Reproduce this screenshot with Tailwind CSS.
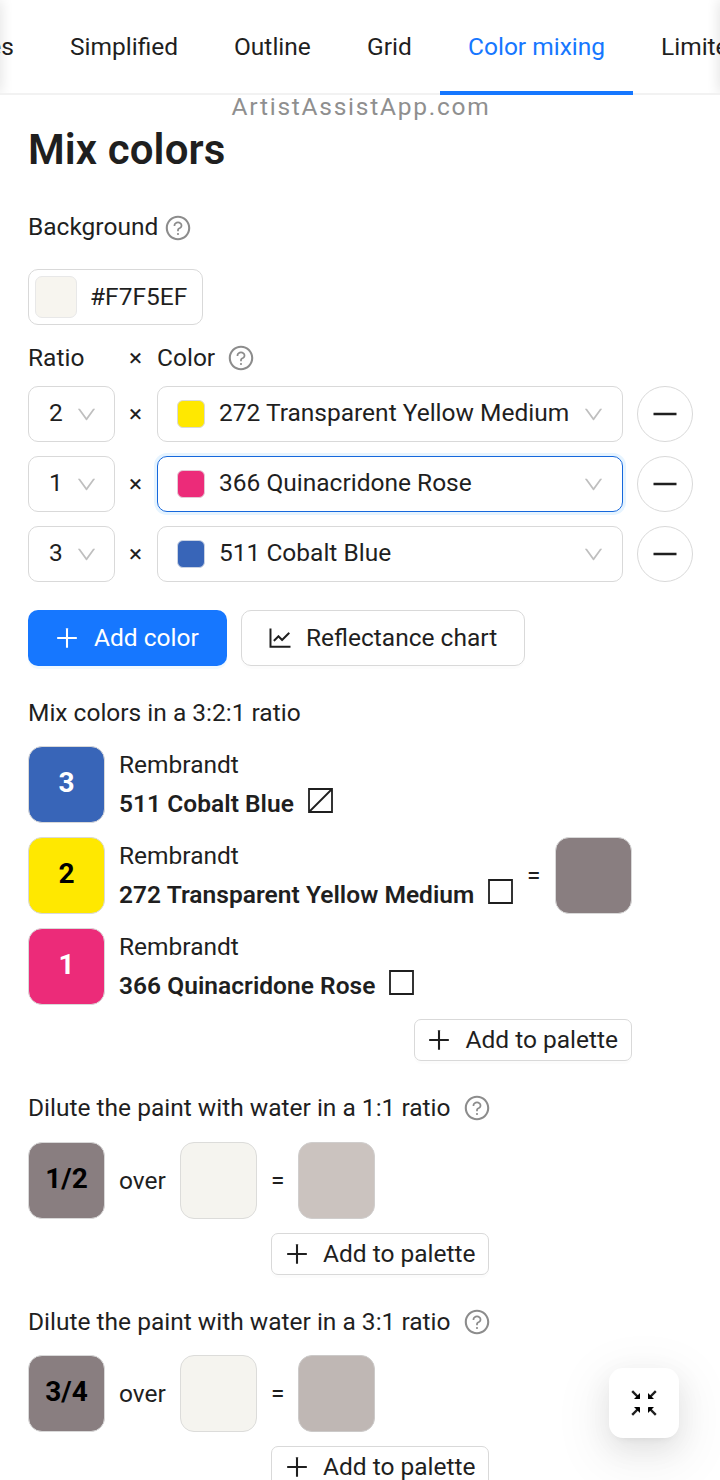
<!DOCTYPE html>
<html lang="en">
<head>
<meta charset="utf-8">
<title>Mix colors</title>
<script src="https://cdn.jsdelivr.net/npm/@tailwindcss/browser@4"></script>
</head>
<body class="bg-white">
<svg class="hidden">
  <symbol id="help" viewBox="0 0 1024 1024"><path d="M512 64C264.6 64 64 264.6 64 512s200.6 448 448 448 448-200.6 448-448S759.4 64 512 64zm0 820c-205.4 0-372-166.6-372-372s166.6-372 372-372 372 166.6 372 372-166.6 372-372 372z"/><path d="M623.6 316.7C593.6 290.4 554 276 512 276s-81.6 14.5-111.6 40.7C369.2 344 352 380.7 352 420v7.6c0 4.4 3.6 8 8 8h48c4.4 0 8-3.6 8-8V420c0-44.1 43.1-80 96-80s96 35.9 96 80c0 31.1-22 59.6-56.1 72.7-21.2 8.1-39.2 22.3-52.1 40.9-13.1 19-19.9 41.8-19.9 64.9V620c0 4.4 3.6 8 8 8h48c4.4 0 8-3.6 8-8v-22.7a48.3 48.3 0 0 1 30.9-44.8c59-22.7 97.1-74.7 97.1-132.5.1-39.3-17.1-76-48.3-103.3zM472 732a40 40 0 1 0 80 0 40 40 0 1 0-80 0z"/></symbol>
  <symbol id="down" viewBox="0 0 1024 1024"><path d="M884 256h-75c-5.1 0-9.9 2.5-12.9 6.6L512 654.2 227.9 262.6c-3-4.1-7.8-6.6-12.9-6.6h-75c-6.5 0-10.3 7.4-6.5 12.7l352.6 486.1c12.8 17.6 39 17.6 51.7 0l352.6-486.1c3.9-5.3.1-12.7-6.4-12.7z"/></symbol>
  <symbol id="plus" viewBox="0 0 1024 1024"><path d="M482 152h60q8 0 8 8v704q0 8-8 8h-60q-8 0-8-8V160q0-8 8-8z"/><path d="M160 474h704q8 0 8 8v60q0 8-8 8H160q-8 0-8-8v-60q0-8 8-8z"/></symbol>
  <symbol id="minus" viewBox="0 0 1024 1024"><path d="M872 474H152c-4.4 0-8 3.6-8 8v60c0 4.4 3.6 8 8 8h720c4.4 0 8-3.6 8-8v-60c0-4.4-3.6-8-8-8z"/></symbol>
  <symbol id="chart" viewBox="0 0 1024 1024"><path d="M888 792H200V168c0-4.4-3.6-8-8-8h-56c-4.4 0-8 3.6-8 8v688c0 4.4 3.6 8 8 8h752c4.4 0 8-3.6 8-8v-56c0-4.4-3.6-8-8-8zM305.8 637.7c3.1 3.1 8.1 3.1 11.3 0l138.3-137.6L583 628.5c3.1 3.1 8.2 3.1 11.3 0l275.4-275.3c3.1-3.1 3.1-8.2 0-11.3l-39.6-39.6a8.03 8.03 0 0 0-11.3 0l-230 229.9L461.4 404a8.03 8.03 0 0 0-11.3 0L266.3 586.7a8.03 8.03 0 0 0 0 11.3l39.5 39.7z"/></symbol>
  <symbol id="square" viewBox="0 0 25 25"><path d="M1 1h23v23H1z" fill="none" stroke="currentColor" stroke-width="1.8"/></symbol>
  <symbol id="square-slash" viewBox="0 0 25 25"><path d="M1 1h23v23H1zM1 24L24 1" fill="none" stroke="currentColor" stroke-width="1.8"/></symbol>
  <symbol id="arrow" viewBox="0 0 10 10"><path d="M1.2 1.2L6.5 6.5" stroke="currentColor" stroke-width="2.4"/><path d="M9 3v5.4q0 .6-.6.6H3z"/></symbol>
</svg>

<div class="relative h-[1480px] w-[720px] overflow-hidden bg-white font-['Roboto',sans-serif] text-[24.5px] leading-[38px] text-[#1f1f1f]">
  <nav class="relative flex h-[95px] overflow-hidden border-b-2 border-[#f2f2f2]">
    <div class="flex shrink-0 gap-[56px] pt-[28px] whitespace-nowrap -ml-[66px]">
      <span class="w-[80px] text-right">Styles</span>
      <span class="w-[108px]">Simplified</span>
      <span class="w-[77px]">Outline</span>
      <span class="w-[45px]">Grid</span>
      <span class="w-[137px] text-[#1677ff]">Color mixing</span>
      <span>Limited palette</span>
    </div>
    <div class="absolute top-0 -left-[10px] h-full w-[10px] shadow-[0_0_14px_rgba(0,0,0,0.14)]"></div>
    <div class="absolute top-0 -right-[10px] h-full w-[10px] shadow-[0_0_14px_rgba(0,0,0,0.14)]"></div>
  </nav>
  <div class="absolute top-[91px] left-[440px] h-[4px] w-[193px] bg-[#1677ff]"></div>

  <div class="-mt-px flex h-[25px] items-center justify-center pl-[2px] text-[24.5px] tracking-[1.75px] text-[#8f8f8f]">ArtistAssistApp.com</div>

  <main class="pl-[28px]">
    <h1 class="flex h-[62px] items-center text-[42px] font-semibold tracking-[0.1px]">Mix colors</h1>
    <div class="mt-[27px] flex h-[38px] items-center gap-[6px]">Background
      <svg class="mt-px size-[28px] fill-[#8c8c8c]"><use href="#help"/></svg>
    </div>
    <div class="mt-[23px] flex h-[56px] w-[175px] items-center rounded-[10px] border border-[#d9d9d9] pl-[6px]">
      <div class="size-[42px] rounded-[7px] border border-[#e8e8e8] bg-[#f7f5ef]"></div>
      <span class="ml-[13px]">#F7F5EF</span>
    </div>

    <div class="mt-[14px] flex h-[38px] items-center">
      <span class="w-[101px]">Ratio</span><span class="w-[28px]">×</span><span class="w-[70px]">Color</span>
      <svg class="size-[28px] fill-[#8c8c8c]"><use href="#help"/></svg>
    </div>

    <div class="mt-[9px] flex flex-col gap-[14px]">
      <div class="flex h-[56px] items-center">
        <div class="flex h-full w-[87px] items-center justify-between rounded-[10px] border border-[#d9d9d9] pr-[16px] pl-[20px]"><span class="pb-[2px]">2</span><svg class="size-[23px] fill-[#bfbfbf]"><use href="#down"/></svg></div>
        <span class="w-[42px] pl-[14px]">×</span>
        <div class="flex h-full w-[466px] items-center rounded-[10px] border border-[#d9d9d9] pr-[17px] pl-[19px]"><i class="size-[28px] rounded-[6px] border border-[#d9d9d9] bg-[#ffe800]"></i><span class="ml-[14px] flex-1 pb-[2px] whitespace-nowrap">272 Transparent Yellow Medium</span><svg class="size-[23px] fill-[#bfbfbf]"><use href="#down"/></svg></div>
        <div class="ml-[14px] flex size-[56px] items-center justify-center rounded-full border border-[#d9d9d9]"><svg class="mb-px size-[32px] fill-[#1f1f1f]"><use href="#minus"/></svg></div>
      </div>
      <div class="flex h-[56px] items-center">
        <div class="flex h-full w-[87px] items-center justify-between rounded-[10px] border border-[#d9d9d9] pr-[16px] pl-[20px]"><span class="pb-[2px]">1</span><svg class="size-[23px] fill-[#bfbfbf]"><use href="#down"/></svg></div>
        <span class="w-[42px] pl-[14px]">×</span>
        <div class="flex h-full w-[466px] items-center rounded-[10px] border-[1.5px] border-[#1668dc] pr-[17px] pl-[19px] shadow-[0_0_0_3px_rgba(5,145,255,0.1)]"><i class="size-[28px] rounded-[6px] border border-[#e3c9d4] bg-[#ec2b79]"></i><span class="ml-[14px] flex-1 pb-[2px] whitespace-nowrap">366 Quinacridone Rose</span><svg class="size-[23px] fill-[#bfbfbf]"><use href="#down"/></svg></div>
        <div class="ml-[14px] flex size-[56px] items-center justify-center rounded-full border border-[#d9d9d9]"><svg class="mb-px size-[32px] fill-[#1f1f1f]"><use href="#minus"/></svg></div>
      </div>
      <div class="flex h-[56px] items-center">
        <div class="flex h-full w-[87px] items-center justify-between rounded-[10px] border border-[#d9d9d9] pr-[16px] pl-[20px]"><span class="pb-[2px]">3</span><svg class="size-[23px] fill-[#bfbfbf]"><use href="#down"/></svg></div>
        <span class="w-[42px] pl-[14px]">×</span>
        <div class="flex h-full w-[466px] items-center rounded-[10px] border border-[#d9d9d9] pr-[17px] pl-[19px]"><i class="size-[28px] rounded-[6px] border border-[#c9d2e3] bg-[#3865b8]"></i><span class="ml-[14px] flex-1 pb-[2px] whitespace-nowrap">511 Cobalt Blue</span><svg class="size-[23px] fill-[#bfbfbf]"><use href="#down"/></svg></div>
        <div class="ml-[14px] flex size-[56px] items-center justify-center rounded-full border border-[#d9d9d9]"><svg class="mb-px size-[32px] fill-[#1f1f1f]"><use href="#minus"/></svg></div>
      </div>
    </div>

    <div class="mt-[28px] flex h-[56px] gap-[14px]">
      <button class="flex w-[199px] items-center rounded-[10px] bg-[#1677ff] pl-[25px] text-white shadow-[0_3px_0_rgba(5,145,255,0.06)]"><svg class="mb-px size-[28px] fill-white"><use href="#plus"/></svg><span class="ml-[13px]">Add color</span></button>
      <button class="flex w-[284px] items-center rounded-[10px] border border-[#d9d9d9] pl-[24px] shadow-[0_3px_0_rgba(0,0,0,0.01)]"><svg class="mb-px size-[28px] fill-[#1f1f1f]"><use href="#chart"/></svg><span class="ml-[13px] -translate-x-px">Reflectance chart</span></button>
    </div>

    <div class="mt-[28px] h-[38px]">Mix colors in a 3:2:1 ratio</div>

    <section class="mt-[14px] w-[603.5px]">
      <div class="flex items-center justify-between">
        <div class="flex flex-col gap-[14px]">
          <div class="flex h-[77px] gap-[14px]">
            <div class="flex size-[77px] items-center justify-center rounded-[14px] border border-[#d9d9d9] bg-[#3865b8] pb-[4px] text-[28px] font-bold text-white">3</div>
            <div><div>Rembrandt</div><div class="mt-px flex items-center gap-[14px] font-semibold tracking-[0.04px]">511 Cobalt Blue<svg class="mb-[8px] size-[25px]"><use href="#square-slash"/></svg></div></div>
          </div>
          <div class="flex h-[77px] gap-[14px]">
            <div class="flex size-[77px] items-center justify-center rounded-[14px] border border-[#d9d9d9] bg-[#ffe800] pb-[4px] text-[28px] font-bold text-black">2</div>
            <div><div>Rembrandt</div><div class="mt-px flex items-center gap-[14px] font-semibold tracking-[0.04px]">272 Transparent Yellow Medium<svg class="mb-[8px] size-[25px]"><use href="#square"/></svg></div></div>
          </div>
          <div class="flex h-[77px] gap-[14px]">
            <div class="flex size-[77px] items-center justify-center rounded-[14px] border border-[#d9d9d9] bg-[#ec2b79] pb-[4px] text-[28px] font-bold text-white">1</div>
            <div><div>Rembrandt</div><div class="mt-px flex items-center gap-[14px] font-semibold tracking-[0.04px]">366 Quinacridone Rose<svg class="mb-[8px] size-[25px]"><use href="#square"/></svg></div></div>
          </div>
        </div>
        <div class="flex items-center gap-[14px]"><span>=</span><div class="size-[77px] rounded-[14px] border border-[#d9d9d9] bg-[#897e80]"></div></div>
      </div>
      <button class="mt-[14px] ml-auto flex h-[42px] w-[218px] items-center rounded-[7px] border border-[#d9d9d9] pl-[10px] shadow-[0_3px_0_rgba(0,0,0,0.01)]"><svg class="size-[28px] fill-[#1f1f1f]"><use href="#plus"/></svg><span class="ml-[13px]">Add to palette</span></button>
    </section>

    <section class="mt-[28px] w-[461px]">
      <div class="flex h-[38px] items-center justify-between">Dilute the paint with water in a 1:1 ratio<svg class="-mr-[2px] size-[28px] fill-[#8c8c8c]"><use href="#help"/></svg></div>
      <div class="mt-[15px] flex items-center">
        <div class="flex size-[77px] items-center justify-center rounded-[14px] border border-[#d9d9d9] bg-[#897e80] pb-[4px] text-[28px] font-bold text-black">1/2</div>
        <span class="w-[75px] pl-[14px]">over</span>
        <div class="size-[77px] rounded-[14px] border border-[#dcdcda] bg-[#f5f4ef]"></div>
        <span class="w-[41px] pl-[14px]">=</span>
        <div class="size-[77px] rounded-[14px] border border-[#d0cecd] bg-[#cbc3bf]"></div>
      </div>
      <button class="mt-[14px] ml-auto flex h-[42px] w-[218px] items-center rounded-[7px] border border-[#d9d9d9] pl-[11px] shadow-[0_3px_0_rgba(0,0,0,0.01)]"><svg class="size-[28px] fill-[#1f1f1f]"><use href="#plus"/></svg><span class="ml-[12px]">Add to palette</span></button>
    </section>

    <section class="mt-[28px] w-[461px]">
      <div class="flex h-[38px] items-center justify-between">Dilute the paint with water in a 3:1 ratio<svg class="-mr-[2px] size-[28px] fill-[#8c8c8c]"><use href="#help"/></svg></div>
      <div class="mt-[14px] flex items-center">
        <div class="flex size-[77px] items-center justify-center rounded-[14px] border border-[#d9d9d9] bg-[#897e80] pb-[4px] text-[28px] font-bold text-black">3/4</div>
        <span class="w-[75px] pl-[14px]">over</span>
        <div class="size-[77px] rounded-[14px] border border-[#dcdcda] bg-[#f5f4ef]"></div>
        <span class="w-[41px] pl-[14px]">=</span>
        <div class="size-[77px] rounded-[14px] border border-[#cccac9] bg-[#bfb7b4]"></div>
      </div>
      <button class="mt-[14px] ml-auto flex h-[42px] w-[218px] items-center rounded-[7px] border border-[#d9d9d9] pl-[11px]"><svg class="size-[28px] fill-[#1f1f1f]"><use href="#plus"/></svg><span class="ml-[12px]">Add to palette</span></button>
    </section>
  </main>

  <button class="absolute top-[1368px] left-[609px] grid size-[70px] grid-cols-[10px_10px] place-content-center gap-[6px] rounded-[14px] bg-white shadow-[0_10px_28px_rgba(0,0,0,0.08),0_5px_10px_-7px_rgba(0,0,0,0.12),0_15px_49px_14px_rgba(0,0,0,0.05)]">
    <svg class="size-[10px]"><use href="#arrow"/></svg>
    <svg class="size-[10px] -scale-x-100"><use href="#arrow"/></svg>
    <svg class="size-[10px] -scale-y-100"><use href="#arrow"/></svg>
    <svg class="size-[10px] rotate-180"><use href="#arrow"/></svg>
  </button>
</div>
</body>
</html>
